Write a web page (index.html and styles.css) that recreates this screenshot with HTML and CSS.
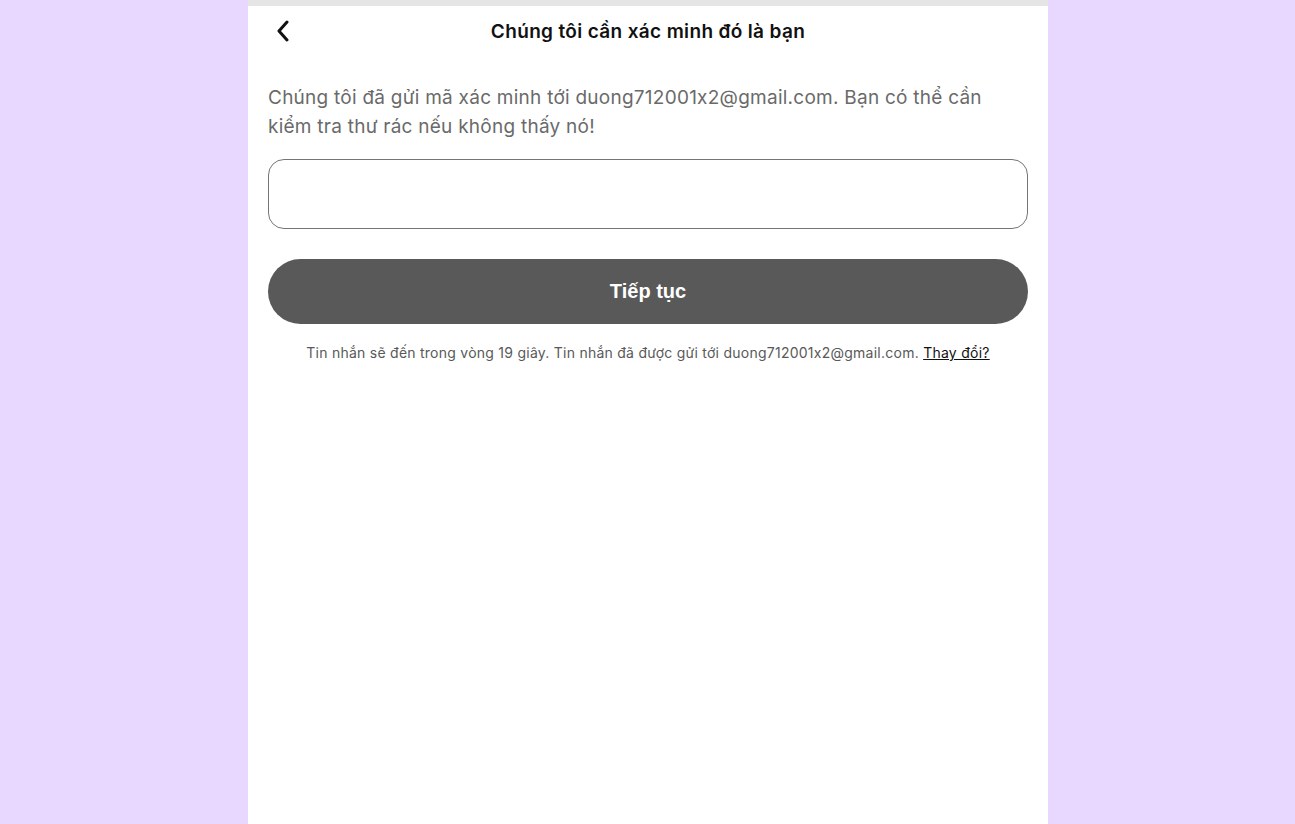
FILE: index.html
```html
<!DOCTYPE html>
<html lang="vi">
<head>
<meta charset="utf-8">
<link rel="stylesheet" href="styles.css">
</head>
<body>
<div class="panel">
  <div class="topstrip"></div>
  <div class="content">
    <header class="head">
      <button class="back" aria-label="Quay lại">
        <svg width="14" height="22" viewBox="0 0 14 22"><path d="M11 2 L3 11 L11 20" fill="none" stroke="#111" stroke-width="3" stroke-linecap="round" stroke-linejoin="round"/></svg>
      </button>
      <h1 class="title">Chúng tôi cần xác minh đó là bạn</h1>
    </header>
    <p class="desc">Chúng tôi đã gửi mã xác minh tới duong712001x2@gmail.com. Bạn có thể cần kiểm tra thư rác nếu không thấy nó!</p>
    <input class="code" type="text">
    <button class="continue">Tiếp tục</button>
    <p class="note">Tin nhắn sẽ đến trong vòng 19 giây. Tin nhắn đã được gửi tới duong712001x2@gmail.com. <a href="#" class="change">Thay đổi?</a></p>
  </div>
</div>
</body>
</html>
```
FILE: styles.css
```css
html, body { margin: 0; padding: 0; }
body {
  background: #e8d8ff;
  height: 824px;
  overflow: hidden;
  display: flex;
  justify-content: center;
  padding-left: 1px;
  font-feature-settings: "calt" 0;
}
.panel {
  width: 800px;
  height: 824px;
  background: #fff;
}
.topstrip { height: 6px; background: #e5e5e5; }
.content { padding: 0 20px; display: flex; flex-direction: column; }
.head {
  height: 50px;
  display: flex;
  align-items: center;
  justify-content: center;
  position: relative;
}
.back {
  position: absolute;
  left: 6px;
  top: 12px;
  border: 0;
  background: none;
  padding: 0;
  width: 18px;
  height: 26px;
  display: flex;
  align-items: center;
  justify-content: center;
}
.title {
  margin: 0;
  font-family: Inter, "Noto Sans", sans-serif;
  font-size: 19px;
  font-weight: 600;
  color: #111;
  letter-spacing: 0.35px;
  font-feature-settings: "calt" 0;
}
.desc {
  margin: 27px 0 0;
  font-family: Inter, "Noto Sans", sans-serif;
  font-size: 19px;
  line-height: 29px;
  color: #6a6a6a;
  letter-spacing: 0.25px;
  font-feature-settings: "calt" 0;
}
.code {
  margin-top: 18px;
  height: 70px;
  box-sizing: border-box;
  border: 1px solid #757575;
  border-radius: 16px;
  outline: none;
  font-size: 18px;
  padding: 0 16px;
}
.continue {
  margin-top: 30px;
  height: 65px;
  border: 0;
  border-radius: 33px;
  background: #595959;
  color: #fff;
  font-family: "Liberation Sans", Arial, sans-serif;
  font-weight: 700;
  font-size: 20px;
}
.note {
  margin: 20px 0 0;
  text-align: center;
  font-family: Inter, "Noto Sans", sans-serif;
  font-size: 14px;
  color: #595959;
  letter-spacing: 0.25px;
  font-feature-settings: "calt" 0;
}
.change { color: #111; text-decoration: underline; }
```
